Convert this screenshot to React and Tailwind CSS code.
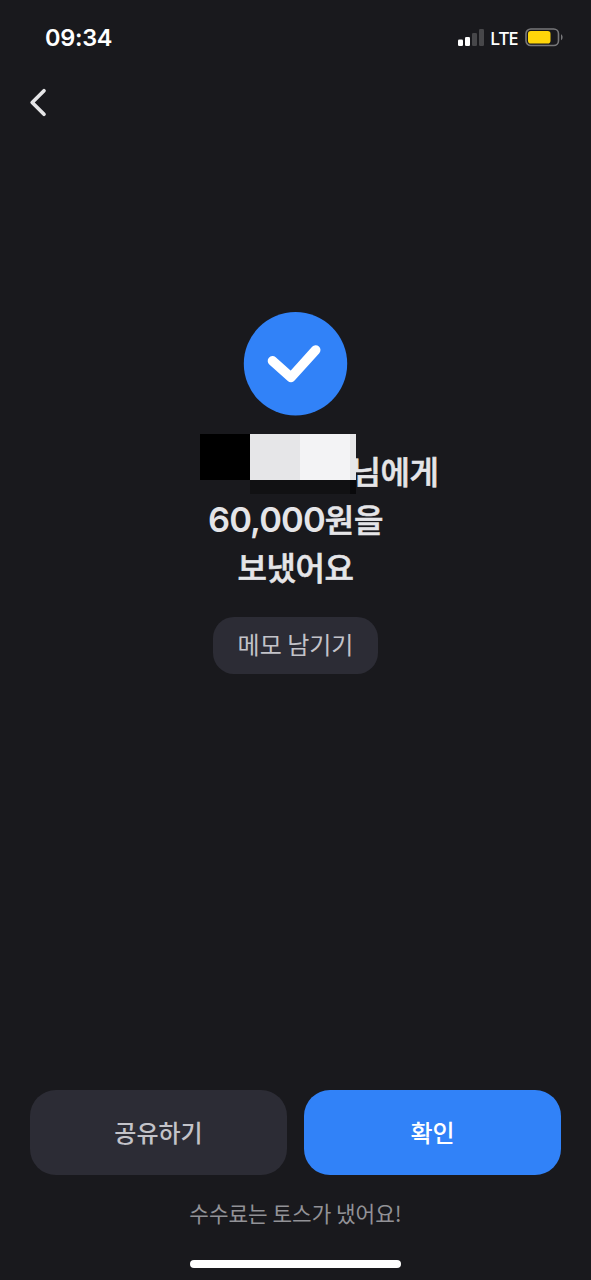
function StatusBar() {
  return (
    <div className="flex h-[76px] items-start justify-between pl-[45px] pr-[27px] text-white">
      <span className="mt-[21px] font-['Inter',sans-serif] text-[23.5px] leading-[34px] font-semibold whitespace-nowrap tracking-[-0.3px]">
        09:34
      </span>
      <div className="mt-[28px] flex h-[20px] items-center">
        <svg width="27" height="20" viewBox="0 0 27 20">
          <rect x="0" y="11.5" width="5" height="6.5" rx="1.3" fill="#fff" />
          <rect x="7" y="9" width="5" height="9" rx="1.3" fill="#fff" />
          <rect x="14" y="5" width="5" height="13" rx="1.3" fill="#47474a" />
          <rect x="21" y="1" width="5" height="17" rx="1.3" fill="#47474a" />
        </svg>
        <span className="ml-[5px] w-[35px] font-['Noto_Sans',sans-serif] text-[18.5px] leading-[20px] font-medium whitespace-nowrap tracking-[-0.8px]">
          LTE
        </span>
        <svg width="39" height="20" viewBox="0 0 39 20">
          <rect x="1" y="1" width="32.5" height="16.5" rx="4.8" fill="none" stroke="#77777a" strokeWidth="1.6" />
          <rect x="3" y="3" width="22.5" height="12.5" rx="2.8" fill="#ffd60a" />
          <path d="M36 6.3c2.1.7 2.1 5.3 0 6z" fill="#77777a" />
        </svg>
      </div>
    </div>
  );
}

function MaskedName() {
  return (
    <div className="relative z-10 flex h-[60px] w-[156px] shrink-0" aria-hidden="true">
      <div className="h-[46px] w-[50px] bg-black" />
      <div className="w-[50px] bg-[#111113]">
        <div className="h-[46px] bg-[#e6e6e8]" />
      </div>
      <div className="w-[50px] bg-[#111113]">
        <div className="h-[46px] bg-[#f3f3f5]" />
      </div>
      <div className="w-[6px] bg-[#09090b]">
        <div className="h-[46px] bg-[#e6e6e8]" />
      </div>
    </div>
  );
}

export default function App() {
  return (
    <main className="flex h-[1280px] w-[591px] flex-col overflow-hidden bg-[#19191d] font-['Noto_Sans_CJK_KR',sans-serif]">
      <StatusBar />
      <header className="h-[236px] pl-[28px] pt-[11px]">
        <button aria-label="뒤로" className="block">
          <svg width="20" height="30" viewBox="0 0 20 30" fill="none" stroke="#e5e5e7" strokeWidth="3.7" strokeLinecap="round" strokeLinejoin="round">
            <path d="M16 3.8 4.2 15.5 16 27.2" />
          </svg>
        </button>
      </header>

      <section className="flex flex-1 flex-col items-center">
        <svg width="105" height="104" viewBox="0 0 105 104" fill="none">
          <circle cx="52.5" cy="51.8" r="51.7" fill="#3182f8" />
          <path d="M29.5 48.9 48 65.4 72.7 38" stroke="#fff" strokeWidth="9.6" strokeLinecap="round" strokeLinejoin="round" />
        </svg>
        <h1 className="mt-[18px] flex flex-col items-center text-[32px] leading-[48px] font-medium text-[#e5e5e8]">
          <span className="ml-[48px] flex h-[60px] items-start">
            <MaskedName />
            <span className="-ml-[5px] mt-[12px] block whitespace-nowrap tracking-[-0.4px] [-webkit-text-stroke:0.6px_#e5e5e8]">님에게</span>
          </span>
          <span className="flex h-[48px] items-baseline whitespace-nowrap">
            <span className="font-['Inter',sans-serif] text-[34.5px] font-semibold tracking-[-0.9px]">60,000</span>
            <span className="tracking-[-0.4px] [-webkit-text-stroke:0.6px_#e5e5e8]">원을</span>
          </span>
          <span className="whitespace-nowrap tracking-[-0.4px] [-webkit-text-stroke:0.6px_#e5e5e8]">보냈어요</span>
        </h1>
        <button className="mt-[27px] h-[57px] w-[165px] rounded-[21px] bg-[#2c2c35] pb-[3px] text-[24px] leading-[54px] whitespace-nowrap text-[#c3c3c9]">
          메모 남기기
        </button>
      </section>

      <footer className="flex h-[190px] flex-col items-center">
        <div className="flex h-[85px] gap-[17px] text-[24px] leading-[83px] font-medium">
          <button className="w-[257px] rounded-[26px] bg-[#2c2c35] pb-[2px] text-[#c3c3c9]">공유하기</button>
          <button className="w-[257px] rounded-[26px] bg-[#3182f8] pb-[2px] text-white">확인</button>
        </div>
        <p className="mt-[22px] text-[21.3px] leading-[32px] whitespace-nowrap text-[#929297]">수수료는 토스가 냈어요!</p>
        <div className="mt-[31px] h-[8px] w-[211px] rounded-full bg-white" />
      </footer>
    </main>
  );
}
